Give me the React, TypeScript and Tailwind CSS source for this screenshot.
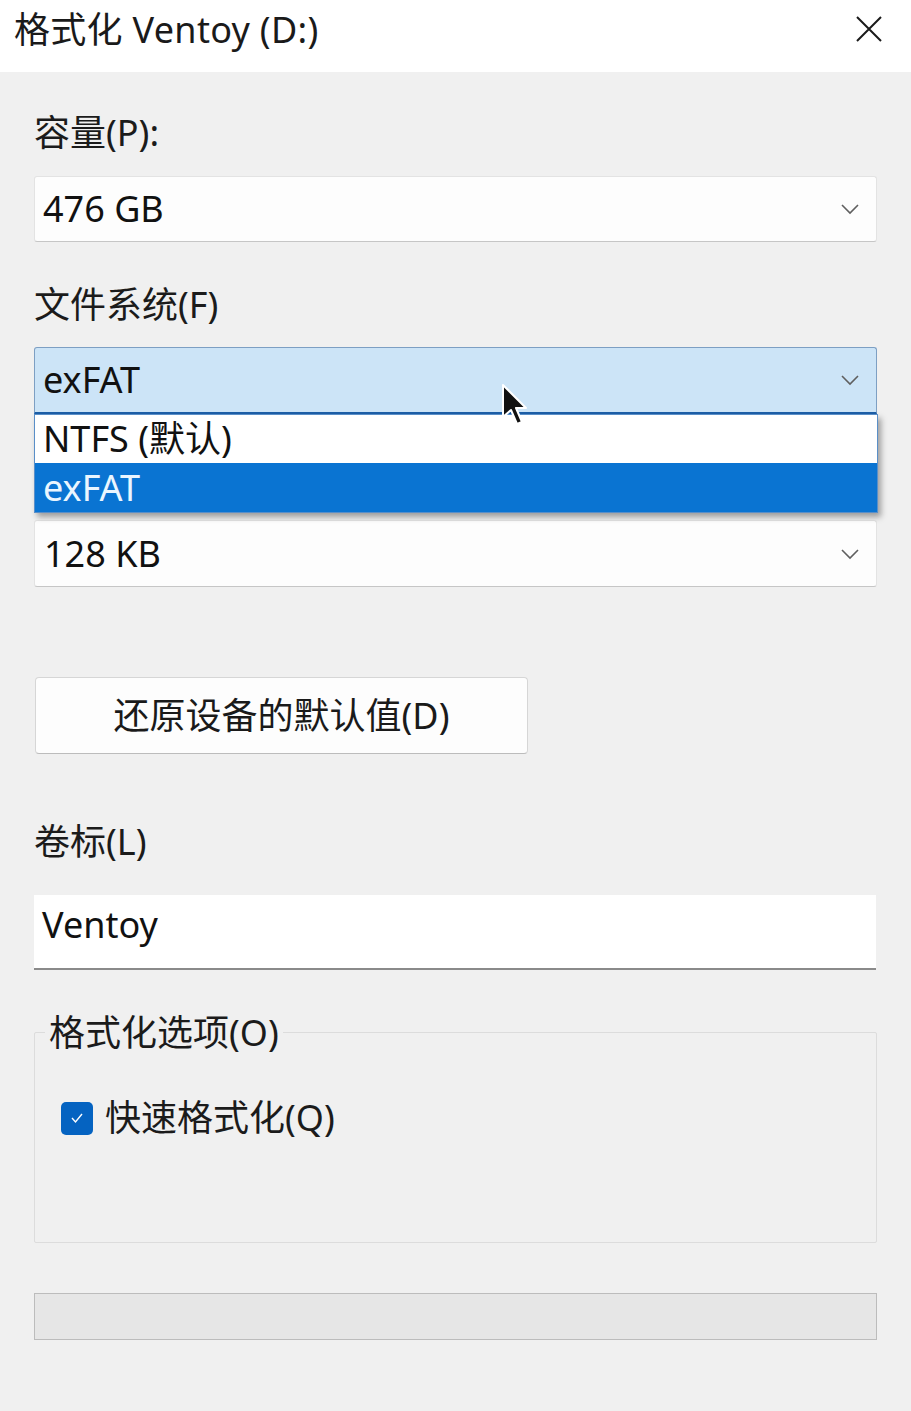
import React from "react";

const Chevron = () => (
  <svg width="20" height="12" viewBox="0 0 20 12" className="shrink-0">
    <path d="M2 2 L10 10 L18 2" fill="none" stroke="#5f5f5f" strokeWidth="1.6" />
  </svg>
);

const Label = ({ children, mt, hidden }: { children: React.ReactNode; mt: string; hidden?: boolean }) => (
  <div className={`h-[36px] leading-[36px] text-[36px] text-[#1b1b1b] ${mt} ${hidden ? "invisible" : ""}`}>{children}</div>
);

export default function App() {
  return (
    <div className="w-[911px] h-[1411px] bg-[#f0f0f0] font-['Noto_Sans','Noto_Sans_CJK_SC',sans-serif] overflow-hidden relative">
      {/* title bar */}
      <div className="h-[72px] bg-white flex items-center justify-between pl-[14px] pr-[28px]">
        <div className="text-[36px] leading-[36px] text-[#1a1a1a] -mt-[12px] tracking-[0.3px]">格式化 Ventoy (D:)</div>
        <svg width="28" height="28" viewBox="0 0 28 28" className="-mt-[14px]">
          <path d="M2 2 L26 26 M26 2 L2 26" stroke="#1a1a1a" strokeWidth="2" />
        </svg>
      </div>

      <div className="px-[34px] pt-[43px] flex flex-col">
        <Label mt="">容量(P):</Label>
        <div className="mt-[25px] h-[66px] bg-[#fdfdfd] border border-[#e3e3e3] border-b-[#c6c6c6] rounded-[3px] flex items-center justify-between pl-[8px] pr-[16px]">
          <span className="text-[36px] leading-[36px] text-[#111]">476 GB</span>
          <Chevron />
        </div>

        <Label mt="mt-[45px]">文件系统(F)</Label>
        <div className="relative mt-[24px]">
          <div className="h-[67px] bg-[#cce4f7] border border-[#7d9fc3] border-b-2 border-b-[#1c5fa8] rounded-t-[3px] flex items-center justify-between pl-[8px] pr-[16px]">
            <span className="text-[36px] leading-[36px] text-[#111]">exFAT</span>
            <Chevron />
          </div>
          <div className="absolute left-0 right-[-1px] top-full z-10 shadow-[3px_4px_6px_rgba(0,0,0,0.35)] border border-[#5a8fc8]">
            <div className="h-[48px] bg-white flex items-center pl-[8px]">
              <span className="text-[36px] leading-[36px] text-[#111]">NTFS (默认)</span>
            </div>
            <div className="h-[49px] bg-[#0a74d2] flex items-center pl-[8px]">
              <span className="text-[36px] leading-[36px] text-[#eaf6ff]">exFAT</span>
            </div>
          </div>
        </div>

        <Label mt="mt-[45px]" hidden>分配单元大小(A)</Label>
        <div className="mt-[25px] h-[67px] bg-[#fdfdfd] border border-[#e3e3e3] border-b-[#c6c6c6] rounded-[3px] flex items-center justify-between pl-[9px] pr-[16px]">
          <span className="text-[36px] leading-[36px] text-[#111]">128 KB</span>
          <Chevron />
        </div>

        <div className="mt-[90px] w-[493px] ml-[1px] h-[77px] bg-[#fdfdfd] border border-[#d6d6d6] border-b-[#bcbcbc] rounded-[4px] flex items-center justify-center">
          <span className="text-[36px] leading-[36px] text-[#1a1a1a]">还原设备的默认值(D)</span>
        </div>

        <Label mt="mt-[70px]">卷标(L)</Label>
        <div className="mt-[35px] h-[75px] w-[842px] bg-white border-b-2 border-[#8a8a8a] flex items-center pl-[8px] pb-[14px]">
          <span className="text-[36px] leading-[36px] text-[#111]">Ventoy</span>
        </div>

        <div className="mt-[62px] relative h-[211px] border border-[#dcdcdc] rounded-[2px]">
          <div className="absolute left-[10px] -top-[18px] px-[4px] bg-[#f0f0f0] h-[36px] leading-[36px] text-[36px] text-[#1b1b1b]">格式化选项(O)</div>
          <div className="mt-[67px] ml-[26px] flex items-center gap-[12px]">
            <div className="w-[32px] h-[33px] rounded-[5px] bg-[#0563c1] flex items-center justify-center">
              <svg width="18" height="16" viewBox="0 0 18 16">
                <path d="M4 8 L7.5 12 L14 4" fill="none" stroke="white" strokeWidth="1.4" />
              </svg>
            </div>
            <span className="text-[36px] leading-[36px] text-[#1b1b1b]">快速格式化(Q)</span>
          </div>
        </div>

        <div className="mt-[50px] h-[47px] bg-[#e6e6e6] border border-[#bcbcbc]" />
      </div>

      {/* mouse cursor */}
      <svg className="absolute left-[501px] top-[383px] z-20" width="30" height="44" viewBox="0 0 30 44">
        <path d="M2 2 L2 34 L10 27 L16 41 L21 39 L15 25 L25 25 Z" fill="#111" stroke="white" strokeWidth="2" strokeLinejoin="round" />
      </svg>
    </div>
  );
}
